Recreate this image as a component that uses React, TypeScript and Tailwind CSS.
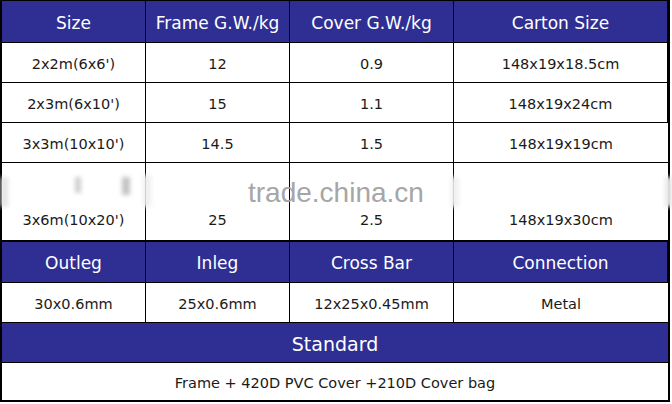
const font = { fontFamily: 'Tahoma, "DejaVu Sans", sans-serif' };

const top = [
  ["2x2m(6x6')", "12", "0.9", "148x19x18.5cm"],
  ["2x3m(6x10')", "15", "1.1", "148x19x24cm"],
  ["3x3m(10x10')", "14.5", "1.5", "148x19x19cm"],
];

const Head = ({ children }: { children: React.ReactNode }) => (
  <div className="flex items-center justify-center pt-[4px] bg-[#2f2f93] text-white text-[17px] border-r border-b border-black last:border-r-0">
    {children}
  </div>
);

const Cell = ({ children }: { children: React.ReactNode }) => (
  <div className="flex items-center justify-center pt-[4px] bg-white text-[#1a1a1a] text-[14.5px] border-r border-b border-black last:border-r-0">
    {children}
  </div>
);

export default function App() {
  return (
    <div className="w-[672px] h-[404px] bg-white" style={font}>
      <div className="relative w-[670px] border-2 border-t border-black">
        <div className="grid grid-cols-[144px_144px_164px_1fr] grid-rows-[42px_40px_40px_40px]">
          <Head>Size</Head>
          <Head>Frame G.W./kg</Head>
          <Head>Cover G.W./kg</Head>
          <Head>Carton Size</Head>
          {top.map((r) => r.map((c, i) => <Cell key={r[0] + i}>{c}</Cell>))}
        </div>
        <div className="grid grid-cols-[144px_144px_164px_1fr] h-[79px] border-b-2 border-black">
          {["3x6m(10x20')", "25", "2.5", "148x19x30cm"].map((c) => (
            <div key={c} className="flex items-end justify-center pb-[8px] text-[14.5px] text-[#1a1a1a] border-r border-black last:border-r-0">
              {c}
            </div>
          ))}
        </div>
        <div className="grid grid-cols-[144px_144px_164px_1fr] grid-rows-[41px_40px]">
          <Head>Outleg</Head>
          <Head>Inleg</Head>
          <Head>Cross Bar</Head>
          <Head>Connection</Head>
          <Cell>30x0.6mm</Cell>
          <Cell>25x0.6mm</Cell>
          <Cell>12x25x0.45mm</Cell>
          <Cell>Metal</Cell>
        </div>
        <div className="flex h-[40px] items-center justify-center pt-[4px] bg-[#2f2f93] text-white text-[19px] border-b border-black">
          Standard
        </div>
        <div className="flex h-[37px] items-center justify-center pt-[4px] text-[14.5px] text-[#1a1a1a]">
          Frame + 420D PVC Cover +210D Cover bag
        </div>

        {/* watermark and smudges */}
        <div className="absolute left-[-1px] top-[176px] w-[7px] h-[30px] bg-[#e4e4e4] blur-[2px]" />
        <div className="absolute left-[73px] top-[176px] w-[6px] h-[16px] bg-[#cfcfcf] blur-[2px]" />
        <div className="absolute left-[120px] top-[176px] w-[8px] h-[18px] bg-[#c4c4c4] blur-[2px]" />
        <div className="absolute left-[141px] top-[174px] w-[8px] h-[32px] bg-[#eeeeee] blur-[2px]" />
        <div className="absolute left-[449px] top-[176px] w-[8px] h-[30px] bg-[#f0f0f0] blur-[2px]" />
        <div className="absolute left-[663px] top-[176px] w-[8px] h-[30px] bg-[#e8e8e8] blur-[2px]" />
        <div
          className="absolute left-[246px] top-[178px] text-[28px] text-[#a6a6a6] leading-none"
          style={{ fontFamily: '"Liberation Sans", Arial, sans-serif' }}
        >
          trade.china.cn
        </div>
      </div>
    </div>
  );
}
